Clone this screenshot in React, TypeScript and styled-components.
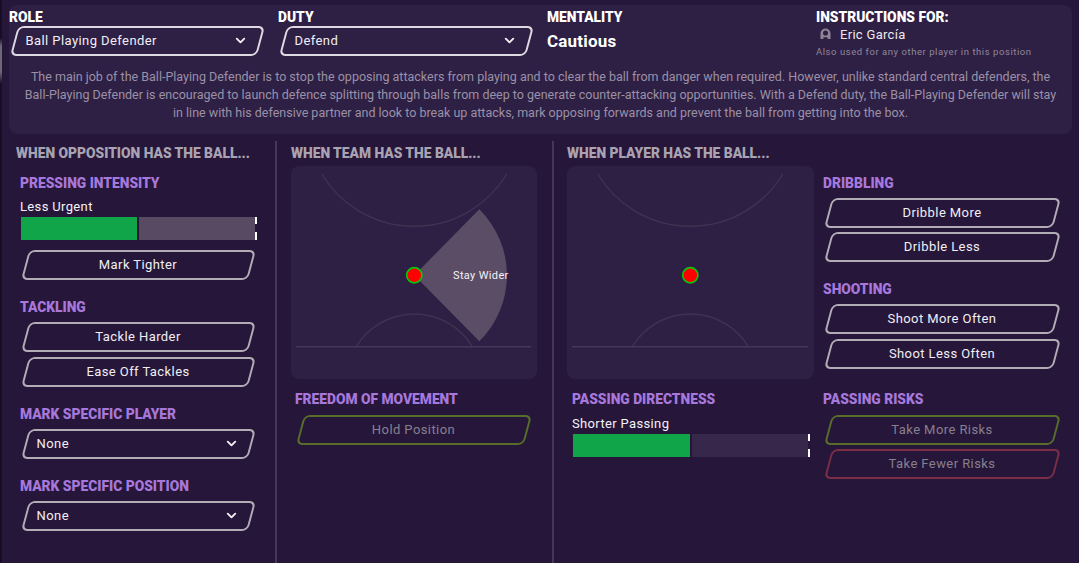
import React from "react";
import styled, { createGlobalStyle } from "styled-components";
import { ChevronDown } from "lucide-react";

const Global = createGlobalStyle`
  html, body { margin: 0; padding: 0; background: #26163a; }
  body { font-family: Roboto, "Liberation Sans", sans-serif; color: #fff; }
`;

const Page = styled.div`
  position: relative;
  width: 1079px;
  height: 563px;
  overflow: hidden;
  background: #26163a;
  padding-top: 5px;
  box-sizing: border-box;
  &::before {
    content: "";
    position: absolute;
    left: 0;
    top: 0;
    bottom: 0;
    width: 1.5px;
    background: linear-gradient(#170d24 0 38px, #6d6675 46px 72px, #170d24 84px);
  }
`;

const TopPanel = styled.section`
  margin-left: 9px;
  width: 1063px;
  height: 129px;
  box-sizing: border-box;
  padding-top: 4px;
  background: #2e1f44;
  border-radius: 8px;
`;

const TopGrid = styled.div`
  display: grid;
  grid-template-columns: 269px 269px 269px 1fr;
  height: 59px;
`;

const FieldLabel = styled.div`
  font-weight: 900;
  font-size: 13.8px;
  line-height: 16px;
  color: #fff;
  text-transform: uppercase;
  white-space: nowrap;
`;

const TopField = styled.div`
  display: flex;
  flex-direction: column;
  gap: 1px;
`;

const Skewed = styled.div<{ $tone?: "bright" | "normal" | "green" | "red"; $w: number; $h?: number; $indent?: number }>`
  position: relative;
  box-sizing: border-box;
  width: ${(p) => p.$w}px;
  height: ${(p) => p.$h ?? 30}px;
  margin-left: ${(p) => p.$indent ?? 0}px;
  padding-bottom: 2px;
  display: flex;
  align-items: center;
  font-size: 13px;
  letter-spacing: 0.42px;
  color: ${(p) => (p.$tone === "green" || p.$tone === "red" ? "#87808f" : "#f1eef4")};
  &::before {
    content: "";
    position: absolute;
    inset: 0 2.5px;
    box-sizing: border-box;
    border-radius: 6px;
    transform: skewX(-15deg);
    border: 2px solid
      ${(p) =>
        p.$tone === "bright"
          ? "#dedae2"
          : p.$tone === "green"
          ? "#596d2b"
          : p.$tone === "red"
          ? "#7b2e45"
          : "#b2acb6"};
  }
`;

const SelectBox = styled(Skewed)`
  justify-content: space-between;
  padding: 0 15px 2px 14.5px;
  svg { display: block; }
`;

const ActionButton = styled(Skewed)`
  justify-content: center;
`;

const MentalityValue = styled.div`
  font-weight: 700;
  font-size: 17px;
  line-height: 20px;
  margin-top: 5px;
  letter-spacing: 0.2px;
`;

const PlayerRow = styled.div`
  display: flex;
  align-items: center;
  gap: 8px;
  margin-left: 3px;
  height: 16px;
  font-size: 13px;
  letter-spacing: 0.3px;
  color: #ece9ef;
`;

const Note = styled.div`
  font-size: 9.5px;
  line-height: 12px;
  margin-top: 3px;
  letter-spacing: 0.55px;
  color: #91899b;
`;

const Description = styled.p`
  margin: 0;
  font-size: 12.5px;
  line-height: 18px;
  text-align: center;
  white-space: nowrap;
  color: #9b91a7;
`;

const Columns = styled.div`
  display: grid;
  grid-template-columns: 277px 277px 1fr;
  height: 422px;
  margin-top: 7px;
`;

const Column = styled.div<{ $pad: number; $rule?: boolean }>`
  box-sizing: border-box;
  padding: 4px 0 0 ${(p) => p.$pad}px;
  border-right: ${(p) => (p.$rule ? "2px solid #45365a" : "none")};
  display: flex;
  flex-direction: column;
`;

const ColumnTitle = styled.h2`
  margin: 0;
  font-weight: 900;
  font-size: 13.8px;
  line-height: 16px;
  text-transform: uppercase;
  white-space: nowrap;
  color: #a9a3b1;
`;

const Stack = styled.div<{ $top?: number }>`
  display: flex;
  flex-direction: column;
  gap: 19px;
  margin-top: ${(p) => p.$top ?? 14}px;
`;

const Section = styled.div<{ $indent?: number; $top?: number }>`
  display: flex;
  flex-direction: column;
  margin-left: ${(p) => p.$indent ?? 4}px;
  margin-top: ${(p) => p.$top ?? 0}px;
`;

const SectionTitle = styled.h3<{ $after?: number }>`
  margin: 0 0 ${(p) => p.$after ?? 7}px;
  font-weight: 900;
  font-size: 13.8px;
  line-height: 16px;
  text-transform: uppercase;
  white-space: nowrap;
  color: #a678db;
`;

const ButtonGroup = styled.div<{ $gap?: number }>`
  display: flex;
  flex-direction: column;
  gap: ${(p) => p.$gap ?? 5}px;
`;

const SliderLabel = styled.div`
  font-size: 13px;
  line-height: 16px;
  letter-spacing: 0.35px;
  color: #f4f2f6;
  margin-bottom: 2px;
`;

const Slider = styled.div<{ $w: number; $after?: number }>`
  position: relative;
  display: flex;
  gap: 2px;
  box-sizing: border-box;
  width: ${(p) => p.$w}px;
  height: 23px;
  margin-left: 1px;
  margin-bottom: ${(p) => p.$after ?? 0}px;
  padding-right: 2px;
  &::after {
    content: "";
    position: absolute;
    right: 0;
    top: 0;
    bottom: 0;
    width: 2px;
    background: linear-gradient(#fff 0 7px, transparent 7px 15px, #fff 15px 23px);
  }
`;

const SliderFill = styled.div`
  flex: 1;
  background: #10a548;
`;

const SliderRest = styled.div<{ $track: string }>`
  flex: 1;
  background: ${(p) => p.$track};
`;

const PitchBox = styled.div<{ $w: number }>`
  position: relative;
  width: ${(p) => p.$w}px;
  height: 213px;
  margin-top: 5px;
  border-radius: 8px;
  background: #2e1f44;
  svg { display: block; }
`;

const PitchCaption = styled.span`
  position: absolute;
  left: 162px;
  top: 103px;
  font-size: 11px;
  line-height: 14px;
  white-space: nowrap;
  letter-spacing: 0.35px;
  color: #f4f2f6;
`;

const PlayerCols = styled.div`
  display: grid;
  grid-template-columns: 247px 1fr;
  column-gap: 9px;
`;

const PlayerLeft = styled.div`
  display: flex;
  flex-direction: column;
`;

const RightStack = styled.div`
  display: flex;
  flex-direction: column;
  padding-top: 30px;
`;

const Pitch = ({ wedge, caption, w }: { wedge?: boolean; caption?: string; w: number }) => {
  const cx = Math.floor(w / 2) + 0.3;
  return (
    <PitchBox $w={w}>
      <svg width={w} height={213} viewBox={`0 0 ${w} 213`} fill="none">
        <path d={`M${cx - 92.5} 8A108 108 0 0 0 ${cx + 92.5} 8`} stroke="#413252" strokeWidth="1.4" />
        <path d={`M${cx - 58} 180.5A68 68 0 0 1 ${cx + 58} 180.5`} stroke="#413252" strokeWidth="1.4" />
        <path d={`M5 180.7H${w - 6}`} stroke="#45365a" strokeWidth="1.4" />
        {wedge && (
          <path
            d={`M${cx} 109.3L${cx + 65} 43.3A92.6 92.6 0 0 1 ${cx + 65} 175.3Z`}
            fill="#5b4d66"
          />
        )}
        <circle cx={cx} cy={109.3} r={7.6} fill="#ff0000" stroke="#08c808" strokeWidth="1.7" />
      </svg>
      {caption && <PitchCaption>{caption}</PitchCaption>}
    </PitchBox>
  );
};

const Chevron = () => <ChevronDown size={15} strokeWidth={3} color="#f1eef4" />;

const PersonIcon = () => (
  <svg width="13" height="12" viewBox="0 0 13 12">
    <path d="M6.5 0.5A5 5 0 0 0 1.5 5.5V11H4.4V9.2H8.6V11H11.5V5.5A5 5 0 0 0 6.5 0.5Z" fill="#8d8596" />
    <ellipse cx="6.5" cy="5" rx="2.5" ry="2.6" fill="#2e1f44" />
  </svg>
);

export default function App() {
  return (
    <Page>
      <Global />
      <TopPanel>
        <TopGrid>
          <TopField>
            <FieldLabel>Role</FieldLabel>
            <SelectBox $tone="bright" $w={252} $indent={2}>
              <span>Ball Playing Defender</span>
              <Chevron />
            </SelectBox>
          </TopField>
          <TopField>
            <FieldLabel>Duty</FieldLabel>
            <SelectBox $tone="bright" $w={252} $indent={2}>
              <span>Defend</span>
              <Chevron />
            </SelectBox>
          </TopField>
          <TopField>
            <FieldLabel>Mentality</FieldLabel>
            <MentalityValue>Cautious</MentalityValue>
          </TopField>
          <TopField>
            <FieldLabel>Instructions for:</FieldLabel>
            <PlayerRow>
              <PersonIcon />
              <span>Eric García</span>
            </PlayerRow>
            <Note>Also used for any other player in this position</Note>
          </TopField>
        </TopGrid>
        <Description>
          The main job of the Ball-Playing Defender is to stop the opposing attackers from playing and to clear the ball from danger when required. However, unlike standard central defenders, the
          <br />
          Ball-Playing Defender is encouraged to launch defence splitting through balls from deep to generate counter-attacking opportunities. With a Defend duty, the Ball-Playing Defender will stay
          <br />
          in line with his defensive partner and look to break up attacks, mark opposing forwards and prevent the ball from getting into the box.
        </Description>
      </TopPanel>

      <Columns>
        <Column $pad={16} $rule>
          <ColumnTitle>When opposition has the ball...</ColumnTitle>
          <Stack>
            <Section>
              <SectionTitle $after={8}>Pressing Intensity</SectionTitle>
              <SliderLabel>Less Urgent</SliderLabel>
              <Slider $w={236} $after={10}>
                <SliderFill />
                <SliderRest $track="#584a63" />
              </Slider>
              <ActionButton $w={232} $indent={2}>Mark Tighter</ActionButton>
            </Section>
            <Section>
              <SectionTitle>Tackling</SectionTitle>
              <ButtonGroup>
                <ActionButton $w={232} $indent={2}>Tackle Harder</ActionButton>
                <ActionButton $w={232} $indent={2}>Ease Off Tackles</ActionButton>
              </ButtonGroup>
            </Section>
            <Section>
              <SectionTitle>Mark Specific Player</SectionTitle>
              <SelectBox $w={232} $indent={2}>
                <span>None</span>
                <Chevron />
              </SelectBox>
            </Section>
            <Section>
              <SectionTitle>Mark Specific Position</SectionTitle>
              <SelectBox $w={232} $indent={2}>
                <span>None</span>
                <Chevron />
              </SelectBox>
            </Section>
          </Stack>
        </Column>

        <Column $pad={14} $rule>
          <ColumnTitle>When team has the ball...</ColumnTitle>
          <Pitch w={246} wedge caption="Stay Wider" />
          <Stack $top={12}>
            <Section>
              <SectionTitle $after={8}>Freedom of Movement</SectionTitle>
              <ActionButton $tone="green" $w={233} $indent={2}>Hold Position</ActionButton>
            </Section>
          </Stack>
        </Column>

        <Column $pad={13}>
          <PlayerCols>
            <PlayerLeft>
              <ColumnTitle>When player has the ball...</ColumnTitle>
              <Pitch w={247} />
              <Stack $top={12}>
                <Section $indent={5}>
                  <SectionTitle $after={9}>Passing Directness</SectionTitle>
                  <SliderLabel>Shorter Passing</SliderLabel>
                  <Slider $w={237}>
                    <SliderFill />
                    <SliderRest $track="#37274a" />
                  </Slider>
                </Section>
              </Stack>
            </PlayerLeft>
            <RightStack>
              <Section $indent={0}>
                <SectionTitle>Dribbling</SectionTitle>
                <ButtonGroup $gap={4}>
                  <ActionButton $w={234} $indent={2}>Dribble More</ActionButton>
                  <ActionButton $w={234} $indent={2}>Dribble Less</ActionButton>
                </ButtonGroup>
              </Section>
              <Section $indent={0} $top={19}>
                <SectionTitle>Shooting</SectionTitle>
                <ButtonGroup>
                  <ActionButton $w={234} $indent={2}>Shoot More Often</ActionButton>
                  <ActionButton $w={234} $indent={2}>Shoot Less Often</ActionButton>
                </ButtonGroup>
              </Section>
              <Section $indent={0} $top={22}>
                <SectionTitle $after={8}>Passing Risks</SectionTitle>
                <ButtonGroup $gap={4}>
                  <ActionButton $tone="green" $w={234} $indent={2}>Take More Risks</ActionButton>
                  <ActionButton $tone="red" $w={234} $indent={2}>Take Fewer Risks</ActionButton>
                </ButtonGroup>
              </Section>
            </RightStack>
          </PlayerCols>
        </Column>
      </Columns>
    </Page>
  );
}
